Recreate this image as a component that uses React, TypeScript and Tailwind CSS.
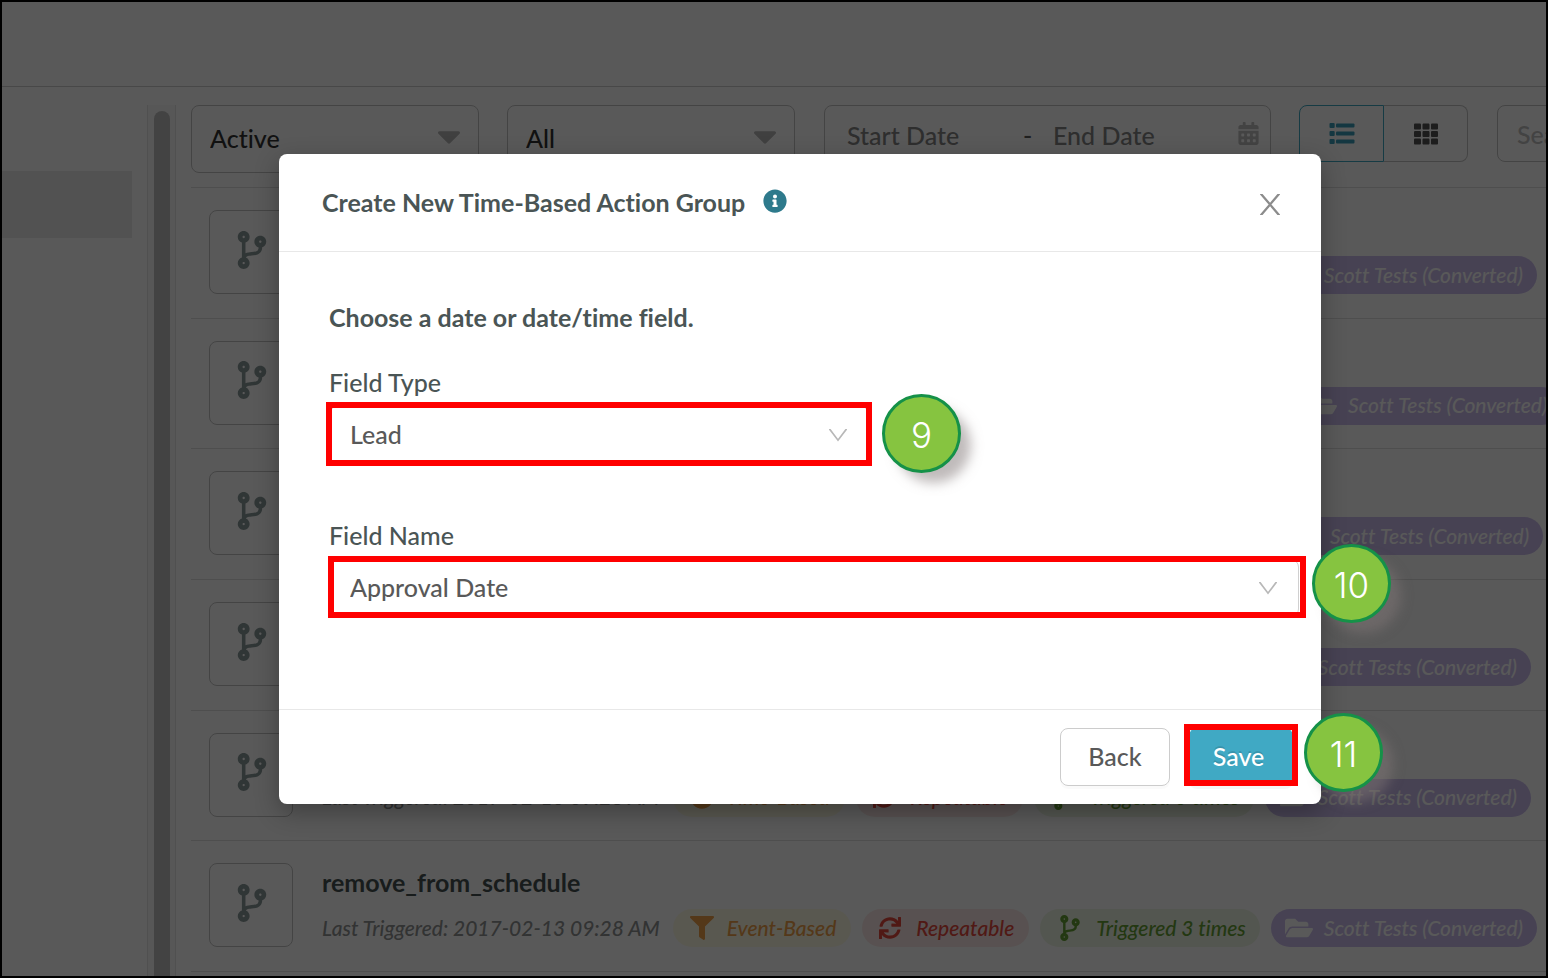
import type { ReactNode } from "react";
import {
  FaCalendarAlt,
  FaCaretDown,
  FaClock,
  FaCodeBranch,
  FaFilter,
  FaFolderOpen,
  FaInfoCircle,
  FaSync,
  FaTh,
} from "react-icons/fa";

type Automation = {
  id: number;
  title?: string;
  kind: "Event-Based" | "Time-Based";
  count: number;
};

const automations: Automation[] = [
  { id: 1, kind: "Event-Based", count: 3 },
  { id: 2, kind: "Event-Based", count: 128 },
  { id: 3, kind: "Time-Based", count: 24 },
  { id: 4, kind: "Time-Based", count: 3 },
  { id: 5, kind: "Time-Based", count: 3 },
  { id: 6, title: "remove_from_schedule", kind: "Event-Based", count: 3 },
];

function ListIcon() {
  return (
    <svg viewBox="0 0 26 21" className="h-[21px] w-[26px]" fill="currentColor" aria-hidden="true">
      {[0, 8, 16].map((y) => (
        <g key={y}>
          <rect x="0.5" y={y} width="5.2" height="5" rx="1" />
          <rect x="7" y={y + 0.5} width="18.5" height="4" rx="1" />
        </g>
      ))}
    </svg>
  );
}

function CloseIcon() {
  return (
    <svg viewBox="0 0 20 21" className="h-[21px] w-5" stroke="currentColor" strokeWidth="2.3" aria-hidden="true">
      <path d="M0.2 -1 L19.8 22 M19.8 -1 L0.2 22" />
    </svg>
  );
}

function ChevronIcon({ className }: { className: string }) {
  return (
    <svg
      viewBox="0 0 18 13"
      className={`h-[13px] w-[18px] ${className}`}
      fill="none"
      stroke="currentColor"
      strokeWidth="1.7"
      aria-hidden="true"
    >
      <path d="M0.2 -0.5 L9 11.2 L17.8 -0.5" />
    </svg>
  );
}

function Pill({ className, children }: { className: string; children: ReactNode }) {
  return (
    <span className={`flex h-[38px] shrink-0 items-center rounded-full pb-px whitespace-nowrap ${className}`}>
      {children}
    </span>
  );
}

function AutomationRow({ item }: { item: Automation }) {
  return (
    <li className="flex items-start border-t border-[#e0e0e0] pt-[22px] pl-[18px]">
      <div className="flex size-[84px] shrink-0 items-center justify-center rounded-lg border border-[#c4c4c4] pb-[5px] pl-px text-[#8b9a9b]">
        <FaCodeBranch className="size-[38px]" />
      </div>
      <div className="ml-[29px] flex flex-col">
        <h3 className="h-[46px] text-[25px] leading-[38px] font-bold text-[#455252]">{item.title}</h3>
        <div className="flex items-center text-[21px] font-medium italic">
          <span className="mr-[13px] pb-px whitespace-nowrap text-[#8f9292]">Last Triggered: 2017-02-13 09:28 AM</span>
          <Pill className="mr-[11px] gap-[13px] bg-[#fffbe6] pr-[15px] pl-[17px] text-[#f0a048]">
            {item.kind === "Event-Based" ? <FaFilter className="size-6" /> : <FaClock className="size-6" />}
            {item.kind}
          </Pill>
          <Pill className="mr-[11px] gap-[15px] bg-[#fbe9e7] pr-[15px] pl-[17px] text-[#e5483d]">
            <FaSync className="size-[22px]" />
            Repeatable
          </Pill>
          <Pill className="mr-[11px] gap-[13px] bg-[#eef6e4] pr-[14px] pl-[17px] text-[#66a035]">
            <FaCodeBranch className="size-[26px]" />
            Triggered {item.count} times
          </Pill>
          <Pill className="gap-[11px] bg-[#cbbdee] px-[14px] text-white">
            <FaFolderOpen className="size-[28px]" />
            Scott Tests (Converted)
          </Pill>
        </div>
      </div>
    </li>
  );
}

function FilterSelect({ label, value }: { label: string; value: string }) {
  return (
    <div className="relative w-[288px] shrink-0">
      <select
        aria-label={label}
        className="h-[68px] w-full appearance-none rounded-lg border border-[#c4c4c4] bg-white px-[18px] text-[25px] font-medium text-[#333333]"
      >
        <option>{value}</option>
      </select>
      <FaCaretDown className="pointer-events-none absolute top-[12px] right-[11px] size-[38px] text-[#b8b8b8]" />
    </div>
  );
}

function Toolbar() {
  return (
    <div className="flex h-[82px] items-start">
      <FilterSelect label="Status" value="Active" />
      <div className="w-7 shrink-0" />
      <FilterSelect label="Type" value="All" />
      <div className="ml-[29px] flex h-[57px] w-[447px] shrink-0 items-center rounded-lg border border-[#c4c4c4] pr-[10px] pl-[22px] text-[25px] font-medium">
        <input
          aria-label="Start date"
          placeholder="Start Date"
          className="w-[160px] pt-1 placeholder:text-[#858585] placeholder:opacity-100"
        />
        <span className="w-[46px] pt-1 pl-4 text-[#606060]">-</span>
        <input
          aria-label="End date"
          placeholder="End Date"
          className="w-[160px] pt-1 placeholder:text-[#858585] placeholder:opacity-100"
        />
        <FaCalendarAlt className="ml-auto size-[23px] text-[#bfbfbf]" />
      </div>
      <div className="ml-7 flex shrink-0">
        <button
          aria-label="List view"
          className="flex h-[57px] w-[85px] items-center justify-center rounded-l-lg border border-[#40a9c4] text-[#3a9fba]"
        >
          <ListIcon />
        </button>
        <button
          aria-label="Grid view"
          className="flex h-[57px] w-[84px] items-center justify-center rounded-r-lg border border-l-0 border-[#c4c4c4] text-[#555555]"
        >
          <FaTh className="size-[24px]" />
        </button>
      </div>
      <input
        aria-label="Search"
        placeholder="Search"
        className="ml-[29px] h-[57px] w-[240px] shrink-0 rounded-lg border border-[#c4c4c4] px-[19px] text-[25px] font-medium placeholder:text-[#bfbfbf] placeholder:opacity-100"
      />
    </div>
  );
}

function StepBadge({ step, className }: { step: number; className: string }) {
  return (
    <span
      className={`absolute flex size-[79px] items-center justify-center rounded-full border-[3px] border-[#159148] bg-[#86c440] pt-[3px] font-[Inter,sans-serif] text-[35px] font-light text-white shadow-[12px_12px_12px_-2px_rgba(130,120,120,0.5)] ${className}`}
    >
      {step}
    </span>
  );
}

function Field({
  id,
  label,
  value,
  width,
  children,
}: {
  id: string;
  label: string;
  value: string;
  width: string;
  children: ReactNode;
}) {
  return (
    <div className="flex flex-col">
      <label htmlFor={id} className="pb-[2px] text-[25px] leading-[44px] font-medium text-[#4a5555]">
        {label}
      </label>
      <div className={`relative ${width}`}>
        <select
          id={id}
          className="h-[58px] w-full appearance-none rounded-lg border border-[#d0d0d0] bg-white px-5 text-[25px] font-medium text-[#595959]"
        >
          <option>{value}</option>
        </select>
        <ChevronIcon className="pointer-events-none absolute top-[23px] right-[22px] text-[#b8b8b8]" />
        {children}
      </div>
    </div>
  );
}

function ActionGroupDialog() {
  return (
    <div
      role="dialog"
      aria-modal="true"
      aria-labelledby="dialog-title"
      className="flex w-full max-w-[1042px] flex-col rounded-lg bg-white shadow-[0_8px_24px_rgba(0,0,0,0.3)]"
    >
      <header className="flex h-[98px] items-center border-b border-[#e8e8e8] px-[43px]">
        <h2 id="dialog-title" className="text-[25px] font-bold text-[#4a5555]">
          Create New Time-Based Action Group
        </h2>
        <FaInfoCircle className="mb-[3px] ml-[18px] size-6 text-[#2e7a8c]" />
        <button aria-label="Close" className="-mr-[2px] ml-auto pt-[3px] text-[#8c8c8c]">
          <CloseIcon />
        </button>
      </header>

      <div className="flex flex-col px-[50px] pt-[45px] pb-[92px]">
        <p className="mb-[23px] text-[25px] leading-[40px] font-bold text-[#4a5555]">Choose a date or date/time field.</p>
        <div className="flex flex-col gap-[49px]">
          <Field id="field-type" label="Field Type" value="Lead" width="w-[540px]">
            <span className="pointer-events-none absolute -inset-x-[3px] -top-[4px] -bottom-[2px] border-[6px] border-[#ff0000]" />
            <StepBadge step={9} className="-top-[12px] -right-[92px]" />
          </Field>
          <Field id="field-name" label="Field Name" value="Approval Date" width="w-[970px]">
            <span className="pointer-events-none absolute -top-[3px] -right-[7px] -bottom-px -left-px border-[6px] border-[#ff0000]" />
            <StepBadge step={10} className="-top-[15px] -right-[92px]" />
          </Field>
        </div>
      </div>

      <footer className="flex h-[95px] items-center justify-end gap-[19px] border-t border-[#e8e8e8] pr-[28px] font-medium">
        <button className="h-[58px] w-[110px] rounded-lg border border-[#cccccc] text-[25px] text-[#595959] shadow-[0_3px_0_rgba(0,0,0,0.02)]">
          Back
        </button>
        <div className="relative">
          <button className="h-[58px] w-[104px] rounded-lg bg-[#40a9c4] pr-[5px] text-[25px] text-white shadow-[0_3px_0_rgba(0,0,0,0.04)] [text-shadow:0_-2px_0_rgba(0,0,0,0.12)]">
            Save
          </button>
          <span className="pointer-events-none absolute -inset-x-[5px] -top-[4px] bottom-0 border-[6px] border-[#ff0000]" />
          <StepBadge step={11} className="-top-[15px] -right-[90px]" />
        </div>
      </footer>
    </div>
  );
}

export default function App() {
  return (
    <div className="relative flex h-screen flex-col overflow-hidden border-2 border-black bg-white font-[Lato,sans-serif] [font-variant-ligatures:no-common-ligatures]">
      <header className="h-[85px] shrink-0 border-b border-[#cfcfcf]" />
      <div className="flex min-h-0 grow">
        <nav className="w-[130px] shrink-0 pt-[84px]">
          <div className="h-[67px] bg-[#eaeaea]" />
        </nav>
        <div className="mt-[18px] ml-[15px] flex w-[29px] shrink-0 justify-center border-x border-[#e6e6e6] bg-[#fafafa] pt-[6px]">
          <div className="w-4 rounded-t-full bg-[#c1c1c1]" />
        </div>
        <main className="ml-[15px] min-w-0 grow overflow-hidden pt-[18px]">
          <Toolbar />
          <ul className="grid h-[784px] grid-rows-6">
            {automations.map((item) => (
              <AutomationRow key={item.id} item={item} />
            ))}
          </ul>
          <div className="border-t border-[#e0e0e0]" />
        </main>
      </div>
      <div className="absolute inset-0 flex items-start justify-center bg-black/65 pt-[152px] pl-[52px]">
        <ActionGroupDialog />
      </div>
    </div>
  );
}
